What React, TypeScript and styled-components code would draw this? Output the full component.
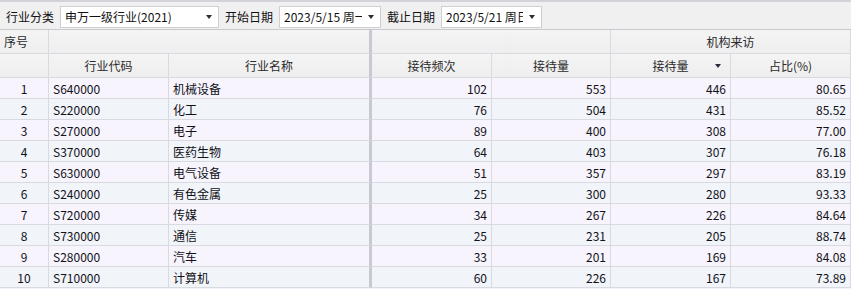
import React from 'react'
import styled, { createGlobalStyle } from 'styled-components'

const Global = createGlobalStyle`
  html, body { margin: 0; padding: 0; background: #ffffff; }
  body { font-family: "Noto Sans CJK SC", "Noto Sans", sans-serif; font-size: 12px; color: #1f1f1f; }
  * { box-sizing: border-box; }
`

const COLS = '49px 120px 203px 120px 119px 120px 120px'

const Page = styled.div`
  width: 851px;
  height: 289px;
  overflow: hidden;
  background: #f4f2fa;
`

const Toolbar = styled.div`
  display: flex;
  align-items: center;
  height: 29px;
  padding: 2px 0 0 6px;
  border-top: 2px solid #d2d2d8;
  background: #f0f0f0;
`

const Label = styled.span`
  color: #111;
  font-size: 12px;
  margin-right: 6px;
  white-space: nowrap;
`

const Select = styled.div<{ w: number }>`
  display: flex;
  align-items: center;
  width: ${p => p.w}px;
  height: 22px;
  margin-right: 6px;
  padding: 0 0 0 4px;
  background: #fff;
  border: 1px solid #cfcfcf;
  font-size: 12px;
  color: #111;
`

const SelText = styled.span`
  flex: 1;
  overflow: hidden;
  white-space: nowrap;
`

const Arrow = styled.span`
  width: 18px;
  display: flex;
  justify-content: center;
  &::after {
    content: '';
    border-left: 3.5px solid transparent;
    border-right: 3.5px solid transparent;
    border-top: 4px solid #2b2b3a;
  }
`

const Table = styled.div`
  border-top: 1px solid #c8c8d0;
`

const Row = styled.div<{ h: number; alt?: boolean; head?: boolean }>`
  display: grid;
  grid-template-columns: ${COLS};
  height: ${p => p.h}px;
  background: ${p => (p.head ? 'linear-gradient(#f4f4f4, #eeeeee)' : p.alt ? '#f1f4f9' : '#f7f4fd')};
`

const Cell = styled.div<{ span?: number; align?: 'left' | 'center' | 'right'; sep?: boolean; head?: boolean }>`
  grid-column: span ${p => p.span || 1};
  display: flex;
  align-items: center;
  justify-content: ${p => (p.align === 'right' ? 'flex-end' : p.align === 'center' ? 'center' : 'flex-start')};
  padding: 0 4px;
  border-right: ${p => (p.sep ? '3px solid #c9c9d3' : '1px solid #d9d9e1')};
  border-bottom: 1px solid #d9d9e1;
  color: ${p => (p.head ? '#2a2a2a' : '#111118')};
  white-space: nowrap;
  overflow: hidden;
  position: relative;
`

const SortMark = styled.span`
  position: absolute;
  right: 9px;
  top: 50%;
  margin-top: -2px;
  border-left: 3.5px solid transparent;
  border-right: 3.5px solid transparent;
  border-top: 4px solid #2b2b3a;
`

const data: [string, string, number, number, number, string][] = [
  ['S640000', '机械设备', 102, 553, 446, '80.65'],
  ['S220000', '化工', 76, 504, 431, '85.52'],
  ['S270000', '电子', 89, 400, 308, '77.00'],
  ['S370000', '医药生物', 64, 403, 307, '76.18'],
  ['S630000', '电气设备', 51, 357, 297, '83.19'],
  ['S240000', '有色金属', 25, 300, 280, '93.33'],
  ['S720000', '传媒', 34, 267, 226, '84.64'],
  ['S730000', '通信', 25, 231, 205, '88.74'],
  ['S280000', '汽车', 33, 201, 169, '84.08'],
  ['S710000', '计算机', 60, 226, 167, '73.89'],
]

export default function App() {
  return (
    <Page>
      <Global />
      <Toolbar>
        <Label>行业分类</Label>
        <Select w={159}>
          <SelText>申万一级行业(2021)</SelText>
          <Arrow />
        </Select>
        <Label>开始日期</Label>
        <Select w={102}>
          <SelText>2023/5/15 周一</SelText>
          <Arrow />
        </Select>
        <Label>截止日期</Label>
        <Select w={101}>
          <SelText>2023/5/21 周日</SelText>
          <Arrow />
        </Select>
      </Toolbar>
      <Table>
        <Row h={24} head>
          <Cell head align="left">序号</Cell>
          <Cell head span={2} sep />
          <Cell head span={2} />
          <Cell head span={2} align="center">机构来访</Cell>
        </Row>
        <Row h={24} head>
          <Cell head />
          <Cell head align="center">行业代码</Cell>
          <Cell head align="center" sep>行业名称</Cell>
          <Cell head align="center">接待频次</Cell>
          <Cell head align="center">接待量</Cell>
          <Cell head align="center">接待量<SortMark /></Cell>
          <Cell head align="center">占比(%)</Cell>
        </Row>
        {data.map((d, i) => (
          <Row key={d[0]} h={21} alt={i % 2 === 1}>
            <Cell align="center">{i + 1}</Cell>
            <Cell align="left">{d[0]}</Cell>
            <Cell align="left" sep>{d[1]}</Cell>
            <Cell align="right">{d[2]}</Cell>
            <Cell align="right">{d[3]}</Cell>
            <Cell align="right">{d[4]}</Cell>
            <Cell align="right">{d[5]}</Cell>
          </Row>
        ))}
      </Table>
    </Page>
  )
}
